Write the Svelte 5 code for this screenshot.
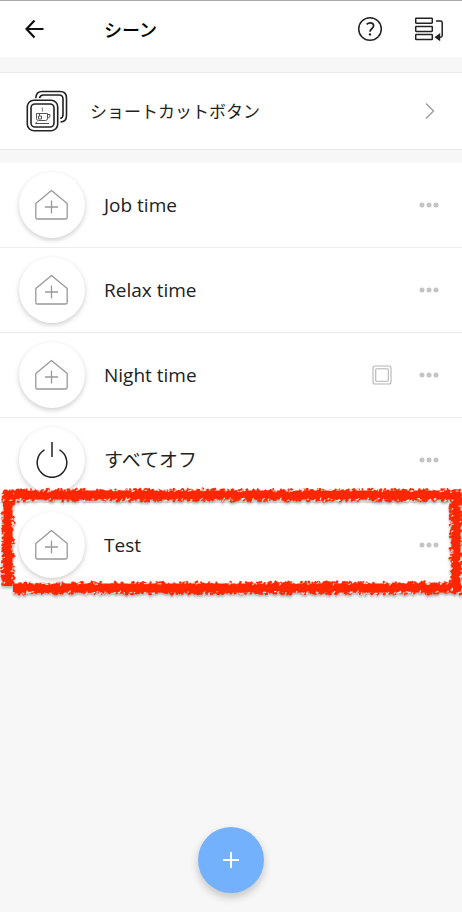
<script>
  const scenes = [
    { name: 'Job time', icon: 'home' },
    { name: 'Relax time', icon: 'home' },
    { name: 'Night time', icon: 'home', shortcut: true },
    { name: 'すべてオフ', icon: 'power' },
    { name: 'Test', icon: 'home', marked: true }
  ];

  // Repeatable pseudo-random numbers for the crayon texture
  let seed = 7;
  function rnd() {
    seed = (seed * 16807) % 2147483647;
    return seed / 2147483647;
  }

  // Short slanted dabs scattered along both edges of a line
  function dabs(x1, y1, x2, y2, near, spread, perPixel) {
    const length = Math.hypot(x2 - x1, y2 - y1);
    const ux = (x2 - x1) / length;
    const uy = (y2 - y1) / length;
    let d = '';
    for (let i = 0; i < length * perPixel; i++) {
      const t = rnd() * length;
      const side = rnd() < 0.5 ? -1 : 1;
      const off = side * (near + rnd() * spread);
      const x = x1 + ux * t - uy * off;
      const y = y1 + uy * t + ux * off;
      const a = -0.6 + (rnd() - 0.5) * 1.4;
      const l = 1.2 + rnd() * 2.6;
      const dx = Math.cos(a) * l;
      const dy = Math.sin(a) * l;
      d += `M${(x - dx / 2).toFixed(1)} ${(y - dy / 2).toFixed(1)}l${dx.toFixed(1)} ${dy.toFixed(1)}`;
    }
    return d;
  }

  const sides = [
    [3, 8, 461, 8],
    [8, 4, 8, 99],
    [13, 101, 461, 101],
    [456, 3, 456, 104]
  ];
  const core = sides.map(([a, b, c, d]) => `M${a} ${b}L${c} ${d}`).join('');
  const outer = sides.map((s) => dabs(...s, 3.4, 2.6, 1)).join('');
  const chips = sides.map((s) => dabs(...s, 3.6, 2.4, 0.3)).join('');
</script>

<div class="page">
  <header>
    <button class="back" aria-label="戻る">
      <svg width="20" height="20" viewBox="0 0 20 20"><path d="M18.5 10H1.5M9.5 1.5L1.5 10L9.5 18.5" fill="none" stroke="#111" stroke-width="2.2" /></svg>
    </button>
    <h1>シーン</h1>
    <button class="help" aria-label="ヘルプ">
      <svg width="26" height="26" viewBox="0 0 26 26" fill="none" stroke="#222">
        <circle cx="13" cy="13" r="11.3" stroke-width="1.5" />
        <path d="M9.6 8.3C10.8 7.3 12 6.9 13.2 6.9C15.3 6.9 16.6 8 16.6 9.8C16.6 12.7 13 12.8 13 15.7" stroke-width="1.7" />
        <circle cx="13" cy="18.4" r="1.2" fill="#222" stroke="none" />
      </svg>
    </button>
    <button class="sort" aria-label="並べ替え">
      <svg width="30" height="26" viewBox="0 0 30 26" fill="none" stroke="#222" stroke-width="1.5">
        <rect x="1.7" y="2.2" width="16.6" height="5" rx="0.6" />
        <rect x="1.7" y="10.4" width="16.6" height="5" rx="0.6" />
        <rect x="1.7" y="18.6" width="16.6" height="5" rx="0.6" />
        <path d="M22 5H26.5Q28.2 5 28.2 6.5V19.5Q28.2 21.2 26.5 21.2H25" />
        <path d="M20.5 21.2L26.2 17V25.2Z" fill="#222" stroke="none" />
      </svg>
    </button>
  </header>

  <a class="shortcut" href="#shortcut">
    <svg width="42" height="42" viewBox="0 0 42 42" fill="none" stroke="#222">
      <g stroke-width="1.6">
        <rect x="1.3" y="10.3" width="30.4" height="30.4" rx="6.5" />
        <rect x="5" y="14" width="23" height="23" rx="4" />
        <path d="M9.8 8.2C10 4 12 1.5 16 1.5H34Q40.5 1.5 40.5 8V25.5Q40.5 31.8 34.5 32" />
        <path d="M13.5 8.2Q14 5 17.5 5H33Q37 5 37 9V24.5Q37 28 34.2 28.3" />
      </g>
      <g stroke-width="1" stroke="#555">
        <path d="M10.5 23.5H21.5V28.5Q21.5 30.5 19.5 30.5H12.5Q10.5 30.5 10.5 28.5Z" />
        <path d="M21.5 24.5H24Q24.5 28 21.5 28.2M9.5 33.5H23M11 31.5L9.5 33.5M13.5 23.5V26M12.5 26H15.5V29H12.5Z" />
        <path d="M16.5 17.5Q15.5 18.7 16.5 19.7Q17 20.7 16.3 21.5" />
      </g>
    </svg>
    <span>ショートカットボタン</span>
    <svg class="chevron" width="10" height="18" viewBox="0 0 10 18"><path d="M1 1.5L8.5 9L1 16.5" fill="none" stroke="#999" stroke-width="1.3" /></svg>
  </a>

  <ul>
    {#each scenes as scene}
      <li>
        <button class="round" aria-label={scene.name}>
          {#if scene.icon === 'home'}
            <svg width="34" height="32" viewBox="0 0 34 32" fill="none" stroke="#999" stroke-width="1.3">
              <path d="M16.5 1.5L32.2 14.5V28.6Q32.2 30 30.8 30H2.2Q0.8 30 0.8 28.6V14.5Z" stroke-linejoin="round" />
              <path d="M16.5 11.5V24.5M10 18H23" />
            </svg>
          {:else}
            <svg width="34" height="36" viewBox="0 0 34 36" fill="none" stroke="#222" stroke-width="1.5">
              <path d="M17 0V15M9.5 7.8A14.8 14.8 0 1 0 24.5 7.8" />
            </svg>
          {/if}
        </button>
        <span class="name">{scene.name}</span>
        {#if scene.shortcut}
          <svg class="badge" width="20" height="20" viewBox="0 0 20 20" fill="none" stroke="#b5b5b5">
            <rect x="1" y="1" width="18" height="18" rx="2" stroke-width="1.1" />
            <rect x="3.7" y="3.7" width="12.6" height="12.6" rx="1" stroke-width="1.1" />
          </svg>
        {/if}
        <button class="more" aria-label="その他">
          <svg width="20" height="6" viewBox="0 0 20 6" fill="#c4c4c4"><circle cx="3" cy="3" r="2.5" /><circle cx="10" cy="3" r="2.5" /><circle cx="17" cy="3" r="2.5" /></svg>
        </button>
        {#if scene.marked}
          <svg class="crayon" viewBox="0 0 462 110" preserveAspectRatio="none" fill="none" aria-hidden="true">
            <path d={core} stroke="#ff2600" stroke-width="9" />
            <path d={outer} stroke="#ff2600" stroke-width="2.2" />
            <path d={chips} stroke="#ffe4dd" stroke-width="1.1" />
          </svg>
        {/if}
      </li>
    {/each}
  </ul>

  <footer>
    <button class="add" aria-label="追加">
      <svg width="18" height="18" viewBox="0 0 18 18"><path d="M9 1V17M1 9H17" stroke="#fff" stroke-width="2" /></svg>
    </button>
  </footer>
</div>

<style>
  :global(body) { margin: 0; background: #f7f7f7; }
  .page {
    box-sizing: border-box;
    min-height: 100vh;
    display: flex;
    flex-direction: column;
    overflow-x: hidden;
    border-top: 1px solid #aaa;
    background: #f7f7f7;
    color: #222;
    font-family: "Open Sans", "Noto Sans CJK JP", sans-serif;
    font-size: 19px;
    line-height: 28px;
  }
  svg { display: block; flex: none; }
  button { padding: 0; border: 0; background: none; color: inherit; font: inherit; }
  header {
    display: flex;
    align-items: center;
    height: 56px;
    padding: 0 18px 0 25px;
    background: #fff;
  }
  h1 {
    flex: 1;
    margin: 0 0 0 59px;
    font-size: 18px;
    font-weight: 500;
    color: #000;
    font-family: "Noto Sans CJK JP", sans-serif;
  }
  .sort { margin-left: 31px; }
  .shortcut {
    display: flex;
    align-items: center;
    margin: 15px 0 13px;
    padding: 17px 26px;
    border: solid #e9e9e9;
    border-width: 1px 0;
    background: #fff;
    color: inherit;
    text-decoration: none;
  }
  .shortcut span {
    flex: 1;
    margin-left: 22px;
    font-size: 17px;
    font-family: "Noto Sans CJK JP", sans-serif;
  }
  .chevron { margin-right: 1px; }
  ul { margin: 0; padding: 0; list-style: none; }
  li {
    position: relative;
    box-sizing: border-box;
    display: flex;
    align-items: center;
    height: 85px;
    padding: 0 23px 0 19px;
    border-bottom: 1px solid #ececec;
    background: #fff;
  }
  li:last-child { border-bottom-color: #fff; }
  .round {
    flex: none;
    display: flex;
    align-items: center;
    justify-content: center;
    width: 66px;
    height: 66px;
    border-radius: 50%;
    background: #fff;
    box-shadow: 0 2px 5px rgba(0, 0, 0, 0.2);
  }
  .name { flex: 1; margin-left: 19px; }
  .badge { margin-right: 27px; }
  .crayon {
    position: absolute;
    left: 0;
    top: -16px;
    width: 100%;
    height: 110px;
    overflow: visible;
    pointer-events: none;
    filter: drop-shadow(0 2px 1px rgba(0, 0, 0, 0.3));
  }
  footer {
    display: flex;
    justify-content: center;
    margin-top: auto;
    padding: 32px 0 19px;
  }
  .add {
    display: flex;
    align-items: center;
    justify-content: center;
    width: 66px;
    height: 66px;
    border-radius: 50%;
    background: #74b1fc;
    box-shadow: 0 4px 8px rgba(0, 0, 0, 0.22);
  }
</style>
